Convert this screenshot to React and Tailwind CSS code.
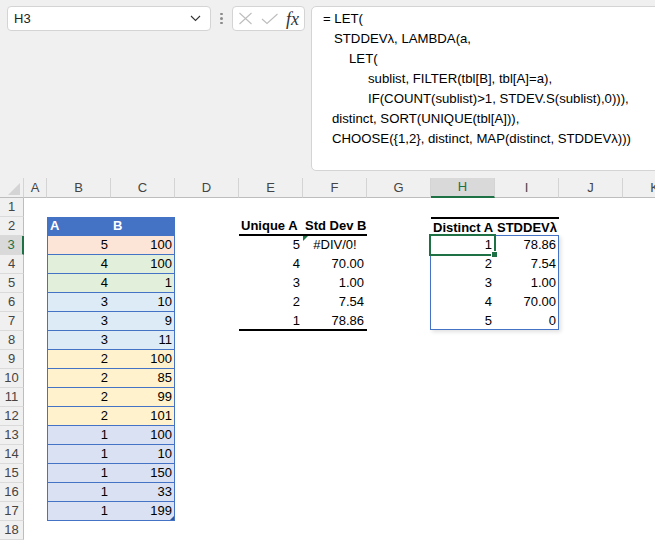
import React from "react";

const COLS = [
  { k: "A", w: "w-[23px]" },
  { k: "B", w: "w-[64px]" },
  { k: "C", w: "w-[64px]" },
  { k: "D", w: "w-[64px]" },
  { k: "E", w: "w-[64px]" },
  { k: "F", w: "w-[64px]" },
  { k: "G", w: "w-[64px]" },
  { k: "H", w: "w-[64px]" },
  { k: "I", w: "w-[64px]" },
  { k: "J", w: "w-[64px]" },
  { k: "K", w: "w-[64px]" },
];

const CELLS = {};
CELLS.B2 = { t: "A", c: "bg-[#4472c4] text-white font-bold pl-[2px] border-l border-[#4472c4]" };
CELLS.C2 = { t: "B", c: "bg-[#4472c4] text-white font-bold pl-[2px] border-r border-[#4472c4]" };
CELLS.E2 = { t: "Unique A", c: "font-bold pl-[2px] border-b-2 border-black" };
CELLS.F2 = { t: "Std Dev B", c: "font-bold pl-[2px] border-b-2 border-black" };
CELLS.H2 = { t: "Distinct A", c: "font-bold pl-[2px] border-t-2 border-black" };
CELLS.I2 = { t: "STDDEV\u03bb", c: "font-bold pl-[2px] border-t-2 border-black" };

const T1 = [
  [5, 100, "bg-[#fce4d6]"],
  [4, 100, "bg-[#e2efda]"],
  [4, 1, "bg-[#e2efda]"],
  [3, 10, "bg-[#ddebf7]"],
  [3, 9, "bg-[#ddebf7]"],
  [3, 11, "bg-[#ddebf7]"],
  [2, 100, "bg-[#fff2cc]"],
  [2, 85, "bg-[#fff2cc]"],
  [2, 99, "bg-[#fff2cc]"],
  [2, 101, "bg-[#fff2cc]"],
  [1, 100, "bg-[#d9e1f2]"],
  [1, 10, "bg-[#d9e1f2]"],
  [1, 150, "bg-[#d9e1f2]"],
  [1, 33, "bg-[#d9e1f2]"],
  [1, 199, "bg-[#d9e1f2]"],
];
T1.forEach(([a, b, bg], i) => {
  const r = i + 3;
  CELLS["B" + r] = { t: String(a), c: `${bg} text-right pr-[3px] border-l border-b border-[#4472c4]` };
  CELLS["C" + r] = { t: String(b), c: `${bg} text-right pr-[2px] border-r border-b border-[#4472c4]` };
});

const T2 = [
  ["5", "#DIV/0!"],
  ["4", "70.00"],
  ["3", "1.00"],
  ["2", "7.54"],
  ["1", "78.86"],
];
T2.forEach(([a, b], i) => {
  const r = i + 3;
  const last = r === 7;
  CELLS["E" + r] = { t: a, c: last ? "text-right pr-[3px] border-b-2 border-black" : "text-right pr-[3px]" };
  CELLS["F" + r] = {
    t: b,
    c: r === 3 ? "text-center" : last ? "text-right pr-[3px] border-b-2 border-black" : "text-right pr-[3px]",
  };
});

const T3 = [
  ["1", "78.86"],
  ["2", "7.54"],
  ["3", "1.00"],
  ["4", "70.00"],
  ["5", "0"],
];
T3.forEach(([a, b], i) => {
  const r = i + 3;
  CELLS["H" + r] = { t: a, c: "text-right pr-[3px]" };
  CELLS["I" + r] = { t: b, c: "text-right pr-[3px]" };
});

function Extras({ id }) {
  if (id === "F3") {
    return (
      <div className="absolute left-0 top-0 w-0 h-0 border-t-[5px] border-r-[5px] border-t-[#1e7145] border-r-transparent" />
    );
  }
  if (id === "C17") {
    return (
      <div className="absolute right-0 bottom-0 w-0 h-0 border-b-[4px] border-l-[4px] border-b-[#2f5597] border-l-transparent" />
    );
  }
  if (id === "H3") {
    return (
      <>
        <div className="absolute -left-[1px] -top-[1px] w-[129px] h-[95px] border border-[#4472c4] shadow-[2px_2px_4px_rgba(0,0,0,0.12)] z-10 pointer-events-none" />
        <div className="absolute -left-[2px] -top-[2px] w-[67px] h-[22px] border-2 border-[#1e7145] z-20" />
        <div className="absolute left-[60px] top-[15px] w-[7px] h-[7px] bg-[#1e7145] border border-white z-30" />
      </>
    );
  }
  return null;
}

function ColHeader() {
  return (
    <div className="flex h-[20px]">
      <div className="w-[24px] h-[20px] shrink-0 border-r border-b border-r-[#d4d4d4] border-b-[#bdbdbd]">
        <svg width="23" height="19" viewBox="0 0 23 19">
          <polygon points="20,5 20,17 8,17" fill="#d4d4d4" />
        </svg>
      </div>
      {COLS.map((c) =>
        c.k === "H" ? (
          <div
            key={c.k}
            className={`${c.w} h-[20px] shrink-0 flex items-center justify-center bg-[#d9d9d9] text-[#1e7145] border-r border-r-[#d4d4d4] border-b-2 border-b-[#1e7145]`}
          >
            {c.k}
          </div>
        ) : (
          <div
            key={c.k}
            className={`${c.w} h-[20px] shrink-0 flex items-center justify-center text-[#444444] border-r border-b border-r-[#d4d4d4] border-b-[#bdbdbd]`}
          >
            {c.k}
          </div>
        )
      )}
    </div>
  );
}

function Row({ r }) {
  return (
    <div className="flex h-[19px]">
      {r === 3 ? (
        <div className="w-[24px] h-[19px] shrink-0 flex items-center justify-center bg-[#d9d9d9] text-[#1e7145] border-b border-b-[#dadada] border-r-2 border-r-[#1e7145]">
          {r}
        </div>
      ) : (
        <div className="w-[24px] h-[19px] shrink-0 flex items-center justify-center text-[#444444] border-b border-r border-b-[#dadada] border-r-[#bdbdbd]">
          {r}
        </div>
      )}
      <div className="flex bg-white">
        {COLS.map((c) => {
          const id = c.k + r;
          const cell = CELLS[id];
          return (
            <div
              key={id}
              className={`relative ${c.w} h-[19px] shrink-0 leading-[18px] whitespace-nowrap text-black ${cell ? cell.c : ""}`}
            >
              {cell ? cell.t : null}
              <Extras id={id} />
            </div>
          );
        })}
      </div>
    </div>
  );
}

const FORMULA = [
  ["pl-[11px]", "= LET("],
  ["pl-[22px]", "STDDEV\u03bb, LAMBDA(a,"],
  ["pl-[37px]", "LET("],
  ["pl-[56px]", "sublist, FILTER(tbl[B], tbl[A]=a),"],
  ["pl-[56px]", "IF(COUNT(sublist)>1, STDEV.S(sublist),0))),"],
  ["pl-[20px]", "distinct, SORT(UNIQUE(tbl[A])),"],
  ["pl-[20px]", "CHOOSE({1,2}, distinct, MAP(distinct, STDDEV\u03bb)))"],
];

export default function App() {
  return (
    <div className="w-[655px] h-[540px] overflow-hidden bg-[#f0f0f0] font-['Liberation_Sans',Arial,sans-serif] text-[13px]">
      <div className="h-[178px] flex items-start pt-[6px] pl-[7px]">
        <div className="w-[204px] h-[25px] shrink-0 bg-white border border-[#d4d4d4] rounded-[4px] flex items-center justify-between pl-[6px] pr-[9px] text-[#222]">
          <span>H3</span>
          <svg width="11" height="7" viewBox="0 0 11 7">
            <path d="M1 1 L5.5 5.5 L10 1" fill="none" stroke="#333" strokeWidth="1.1" />
          </svg>
        </div>
        <div className="w-[21px] h-[25px] shrink-0 flex flex-col items-center justify-center gap-[2px]">
          <div className="w-[2.5px] h-[2.5px] rounded-full bg-[#8a8a8a]" />
          <div className="w-[2.5px] h-[2.5px] rounded-full bg-[#8a8a8a]" />
          <div className="w-[2.5px] h-[2.5px] rounded-full bg-[#8a8a8a]" />
        </div>
        <div className="w-[73px] h-[25px] shrink-0 bg-white border border-[#d4d4d4] rounded-[4px] flex items-center pl-[5px]">
          <svg width="15" height="13" viewBox="0 0 15 13">
            <path d="M1.5 1 L13.5 12 M13.5 1 L1.5 12" stroke="#bdbdbd" strokeWidth="1.1" fill="none" />
          </svg>
          <svg className="ml-[8px]" width="18" height="12" viewBox="0 0 18 12">
            <path d="M1 6 L6 10.5 L16.5 1" stroke="#bdbdbd" strokeWidth="1.1" fill="none" />
          </svg>
          <span className="ml-[7px] font-['Liberation_Serif',serif] italic text-[18px] leading-none text-[#333]">
            fx
          </span>
        </div>
        <div className="ml-[6px] w-[400px] h-[165px] shrink-0 bg-white border border-[#d4d4d4] rounded-[5px] pt-[2px] text-black text-[13.2px] leading-[20px]">
          {FORMULA.map(([p, t], i) => (
            <div key={i} className={`${p} whitespace-pre`}>
              {t}
            </div>
          ))}
        </div>
      </div>
      <ColHeader />
      {Array.from({ length: 18 }, (_, i) => (
        <Row key={i} r={i + 1} />
      ))}
    </div>
  );
}
